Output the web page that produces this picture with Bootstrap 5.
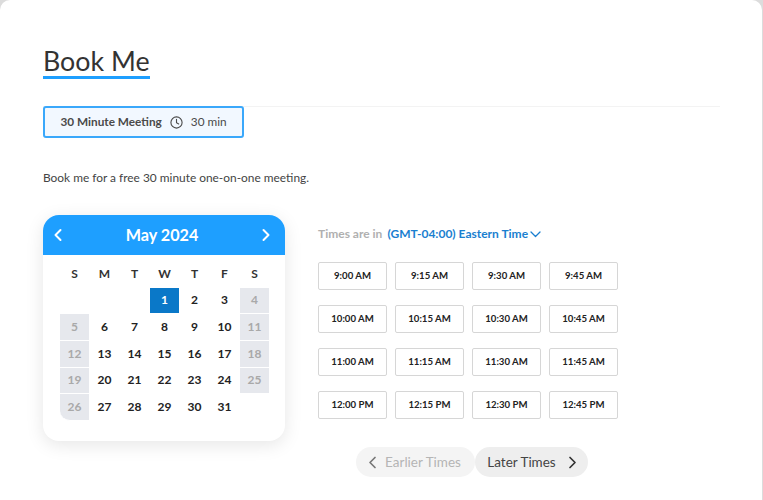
<!DOCTYPE html>
<html lang="en">
<head>
  <meta charset="UTF-8">
  <title>Book Me</title>
  <link href="https://cdn.jsdelivr.net/npm/bootstrap@5.3.0/dist/css/bootstrap.min.css" rel="stylesheet">
  <style>
    html, body { height: 500px; overflow: hidden; }
    body {
      background: #dcdcdc;
      font-family: "Lato", "Open Sans", sans-serif;
      color: #333;
    }
    .sheet {
      height: 500px;
      margin-right: 1px;
      padding: 43px 43px 0;
      background: #fff;
      border-radius: 10px 10px 0 0;
    }
    .page-title {
      display: inline-block;
      margin: 0;
      height: 33px;
      font-size: 26.8px;
      line-height: 37px;
      font-weight: 400;
      color: #333;
      border-bottom: 3px solid #1e9fff;
      box-sizing: content-box;
    }
    .tab-row { margin-top: 27px; border-top: 1px solid #f3f3f3; height: 32px; width: 677px; }
    .tab-box {
      width: 201px;
      height: 32px;
      background: #f2f8ff;
      border: 2px solid #3aa8fb;
      border-radius: 3px;
      font-size: 11.8px;
      color: #4a4a4a;
      position: relative;
      top: -1px;
    }
    .intro { margin: 32px 0 0; font-size: 11.9px; line-height: 16px; color: #444; }
    .booking { margin-top: 29px; }
    .cal-panel {
      width: 242px;
      height: 226px;
      border: 0;
      border-radius: 16px;
      box-shadow: 0 4px 18px rgba(0,0,0,.1);
      overflow: hidden;
    }
    .cal-head {
      height: 40px;
      padding: 0 14px 0 10px;
      background: #1e9fff;
      color: #fff;
      font-size: 16.2px;
      font-weight: 700;
    }
    .day-grid {
      display: grid;
      grid-template-columns: repeat(7, 30px);
      grid-auto-rows: 26.67px;
      padding: 6px 0 0 17px;
      font-size: 12px;
      font-weight: 700;
      color: #222;
      text-align: center;
    }
    .day-grid > div { display: flex; align-items: center; justify-content: center; border-bottom: 1px solid #fff; border-right: 1px solid #fff; }
    .day-name { font-weight: 700; color: #333; }
    .day-off { background: #e6e8ed; color: #a9a9a9; }
    .day-sel { background: #0a78c8; color: #fff; }
    .day-last { border-bottom-left-radius: 10px; }
    .times-col { margin-left: 33px; width: 300px; }
    .tz-line { height: 16px; margin-top: 11px; font-size: 12px; line-height: 16px; font-weight: 700; color: #b0b0b0; white-space: nowrap; }
    .tz-link { color: #1a7fd0; margin-left: 5px; margin-right: 2px; }
    .slot-grid {
      display: grid;
      grid-template-columns: repeat(4, 69px);
      grid-auto-rows: 28px;
      gap: 15px 8px;
      margin-top: 20px;
    }
    .slot-btn {
      padding: 0;
      font-size: 9.6px;
      font-weight: 700;
      color: #222;
      background: #fff;
      border: 1px solid #d6d6d6;
      border-radius: 2px;
    }
    .pager { margin-top: 28px; margin-left: 38px; }
    .pager-btn {
      height: 30px;
      padding: 0;
      font-size: 13.5px;
      border: 0;
      border-radius: 15px;
      background: #f0f0f0;
      color: #555;
    }
    .pager-btn:disabled { background: #f4f4f4; color: #b5b5b5; opacity: 1; }
    .pager-prev { width: 119px; padding-right: 2px; }
    .pager-next { width: 113px; background: #eeeeee; color: #444; padding-left: 1px; }
  </style>
</head>
<body>
  <div class="sheet">
    <h1 class="page-title">Book Me</h1>

    <div class="tab-row">
      <div class="tab-box d-flex align-items-center justify-content-center gap-2">
        <strong>30 Minute Meeting</strong>
        <svg width="13" height="13" viewBox="0 0 13 13" fill="none" stroke="#4a4a4a" stroke-width="1.1" stroke-linecap="round"><circle cx="6.5" cy="6.5" r="5.6"/><path d="M6.5 3.2v3.5l2.2 1.3"/></svg>
        <span>30 min</span>
      </div>
    </div>

    <p class="intro">Book me for a free 30 minute one-on-one meeting.</p>

    <div class="booking d-flex align-items-start">
      <div class="card cal-panel">
        <div class="cal-head d-flex align-items-center justify-content-between">
          <svg width="10" height="14" viewBox="0 0 10 14" fill="none" stroke="#fff" stroke-width="2" stroke-linecap="round" stroke-linejoin="round"><path d="M7.5 2 2.5 7l5 5"/></svg>
          <span>May 2024</span>
          <svg width="10" height="14" viewBox="0 0 10 14" fill="none" stroke="#fff" stroke-width="2" stroke-linecap="round" stroke-linejoin="round"><path d="M2.5 2l5 5-5 5"/></svg>
        </div>
        <div class="day-grid" id="days"></div>
      </div>

      <div class="times-col">
        <div class="tz-line d-flex align-items-center">
          <span>Times are in</span>
          <span class="tz-link">(GMT-04:00) Eastern Time</span>
          <svg width="11" height="7" viewBox="0 0 11 7" fill="none" stroke="#1a7fd0" stroke-width="1.3" stroke-linecap="round" stroke-linejoin="round"><path d="M1 1l4.5 4.5L10 1"/></svg>
        </div>
        <div class="slot-grid" id="slots"></div>
        <div class="pager d-flex">
          <button class="btn pager-btn pager-prev d-flex align-items-center justify-content-center gap-2" disabled>
            <svg width="9" height="13" viewBox="0 0 9 13" fill="none" stroke="#777" stroke-width="1.7" stroke-linecap="round" stroke-linejoin="round"><path d="M7 1.5l-5 5 5 5"/></svg>
            Earlier Times
          </button>
          <button class="btn pager-btn pager-next d-flex align-items-center justify-content-center gap-2">
            Later Times
            <svg class="ms-1" width="9" height="13" viewBox="0 0 9 13" fill="none" stroke="#333" stroke-width="1.7" stroke-linecap="round" stroke-linejoin="round"><path d="M2 1.5l5 5-5 5"/></svg>
          </button>
        </div>
      </div>
    </div>
  </div>

  <script>
    const days = document.getElementById('days');
    let html = ['S','M','T','W','T','F','S'].map(d => `<div class="day-name">${d}</div>`).join('');
    html += '<div></div><div></div><div></div>';
    for (let d = 1; d <= 31; d++) {
      const col = (d + 2) % 7;
      let cls = '';
      if (d === 1) cls = 'day-sel';
      else if (d === 26) cls = 'day-off day-last';
      else if (col === 0 || col === 6) cls = 'day-off';
      html += `<div class="${cls}">${d}</div>`;
    }
    days.innerHTML = html;

    const slots = document.getElementById('slots');
    ['9', '10', '11', '12'].forEach(h => {
      ['00', '15', '30', '45'].forEach(m => {
        slots.innerHTML += `<button class="btn slot-btn">${h}:${m} ${h === '12' ? 'PM' : 'AM'}</button>`;
      });
    });
  </script>
  <script src="https://cdn.jsdelivr.net/npm/bootstrap@5.3.0/dist/js/bootstrap.bundle.min.js"></script>
</body>
</html>
